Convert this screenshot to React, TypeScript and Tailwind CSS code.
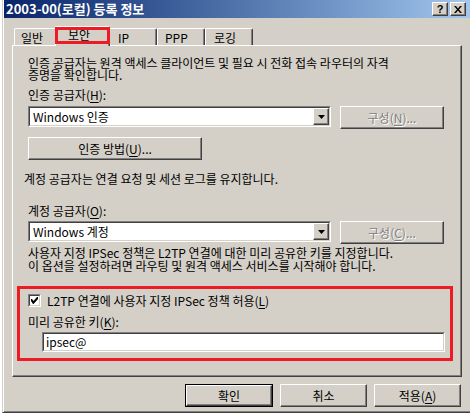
import React from 'react';

const raised =
  'border border-t-white border-l-white border-r-[#404040] border-b-[#404040] shadow-[inset_-1px_-1px_0_#808080]';
const sunken = 'border border-t-[#808080] border-l-[#808080] border-r-white border-b-white';
const sunkenInner = 'border border-t-[#404040] border-l-[#404040] border-r-[#d4d0c8] border-b-[#d4d0c8]';

function Combo({ value }: { value: string }) {
  return (
    <div className={`w-[303px] h-[21px] ${sunken}`}>
      <div className={`h-full flex items-center bg-white ${sunkenInner}`}>
        <span className="flex-1 pl-[3px] leading-[12px]">{value}</span>
        <div className={`w-[16px] h-[17px] bg-[#d4d0c8] flex items-center justify-center ${raised}`}>
          <svg width="7" height="4" viewBox="0 0 7 4">
            <path d="M0 0h7L3.5 4z" fill="#000" />
          </svg>
        </div>
      </div>
    </div>
  );
}

function Button({
  children,
  className = '',
  disabled = false,
}: {
  children: React.ReactNode;
  className?: string;
  disabled?: boolean;
}) {
  return (
    <div
      className={`h-[23px] bg-[#d4d0c8] flex items-center justify-center leading-[12px] ${raised} ${className} ${
        disabled ? 'text-[#808080] [text-shadow:1px_1px_0_#fff]' : ''
      }`}
    >
      {children}
    </div>
  );
}

function Key({ k }: { k: string }) {
  return <u className="underline-offset-[2px]">{k}</u>;
}

const tabs = [
  { label: '일반', w: 'w-[43px]', pl: 'pl-[6px]' },
  { label: '보안', w: 'w-[51px]', pl: 'pl-[10px]', active: true },
  { label: 'IP', w: 'w-[49px]', pl: 'pl-[9px]' },
  { label: 'PPP', w: 'w-[48px]', pl: 'pl-[7px]' },
  { label: '로깅', w: 'w-[48px]', pl: 'pl-[8px]' },
];

export default function App() {
  return (
    <div className="w-[470px] h-[415px] bg-white overflow-hidden font-['Noto_Sans_CJK_KR',sans-serif] text-[12px] text-black">
      <div className="ml-[2px] w-[476px] h-[413px] border-l border-l-[#d4d0c8] border-b border-b-[#404040]">
        <div className="h-full border-l border-l-white bg-[#d4d0c8] shadow-[inset_0_-1px_0_#808080] flex flex-col">
          {/* Title bar */}
          <div className="h-[18px] flex items-center justify-between pr-[12px] bg-gradient-to-r from-[#0a246a] to-[#a6caf0]">
            <span className="pl-[2px] text-white font-bold text-[13px] leading-[14px]">2003-00(로컬) 등록 정보</span>
            <div className="flex gap-[2px]">
              <div className={`w-[16px] h-[14px] bg-[#d4d0c8] flex items-center justify-center ${raised}`}>
                <span className="font-['Liberation_Sans',sans-serif] font-bold text-[11px] leading-[11px]">?</span>
              </div>
              <div className={`w-[16px] h-[14px] bg-[#d4d0c8] flex items-center justify-center ${raised}`}>
                <svg width="8" height="7" viewBox="0 0 8 7">
                  <path d="M0 0h2l2 2.5L6 0h2L5 3.5 8 7H6L4 4.5 2 7H0l3-3.5z" fill="#000" />
                </svg>
              </div>
            </div>
          </div>

          {/* Tabs */}
          <div className="mt-[8px] h-[19px] pl-[10px] flex items-end">
            {tabs.map((t) =>
              t.active ? (
                <div
                  key={t.label}
                  className={`relative z-10 -mx-[2px] -mb-[1px] h-[20px] w-[55px] bg-[#d4d0c8] border-t border-l border-r border-t-white border-l-white border-r-[#404040] rounded-t-[2px] shadow-[inset_-1px_0_0_#808080] pl-[12px] pt-[2px] leading-[12px]`}
                >
                  {t.label}
                  <div className="absolute left-[-1px] right-[-1px] top-[0px] bottom-[2px] border-[3px] border-[#ed1c24]" />
                </div>
              ) : (
                <div
                  key={t.label}
                  className={`${t.w} ${t.pl} h-[17px] border-t border-l border-r border-t-white border-l-white border-r-[#404040] rounded-t-[2px] shadow-[inset_-1px_0_0_#808080] pt-[3px] leading-[12px]`}
                >
                  {t.label}
                </div>
              )
            )}
          </div>

          {/* Tab panel */}
          <div className={`ml-[8px] w-[450px] h-[332px] pl-[4px] pt-[11px] flex flex-col ${raised}`}>
            <p className="ml-[11px] leading-[12px]">
              인증 공급자는 원격 액세스 클라이언트 및 필요 시 전화 접속 라우터의 자격
              <br />
              증명을 확인합니다.
            </p>
            <p className="ml-[11px] mt-[8px] leading-[12px]">
              인증 공급자(<Key k="H" />):
            </p>
            <div className="ml-[11px] mt-[5px] flex items-start gap-[9px]">
              <Combo value="Windows 인증" />
              <Button className="w-[104px]" disabled>
                구성(<Key k="N" />)...
              </Button>
            </div>
            <Button className="ml-[11px] mt-[8px] w-[174px]">
              인증 방법(<Key k="U" />)...
            </Button>
            <p className="ml-[7px] mt-[13px] leading-[12px]">계정 공급자는 연결 요청 및 세션 로그를 유지합니다.</p>
            <p className="ml-[11px] mt-[20px] leading-[12px]">
              계정 공급자(<Key k="O" />):
            </p>
            <div className="ml-[11px] mt-[4px] flex items-start gap-[9px]">
              <Combo value="Windows 계정" />
              <Button className="w-[104px]" disabled>
                구성(<Key k="C" />)...
              </Button>
            </div>
            <p className="ml-[11px] mt-[2px] leading-[13px]">
              사용자 지정 IPSec 정책은 L2TP 연결에 대한 미리 공유한 키를 지정합니다.
              <br />
              이 옵션을 설정하려면 라우팅 및 원격 액세스 서비스를 시작해야 합니다.
            </p>

            {/* Highlighted IPSec group */}
            <div className="mt-[14px] w-[436px] border-[3px] border-[#ed1c24] pt-[5px] pl-[8px] pb-[6px] flex flex-col">
              <div className="flex items-center">
                <div className={`w-[13px] h-[13px] ${sunken}`}>
                  <div className={`w-full h-full bg-white flex items-center justify-center ${sunkenInner}`}>
                    <svg width="7" height="7" viewBox="0 0 7 7">
                      <path d="M0 2h1l1.5 2L6 0h1v2L2.5 7H2L0 4z" fill="#000" />
                    </svg>
                  </div>
                </div>
                <span className="ml-[6px] leading-[12px]">
                  L2TP 연결에 사용자 지정 IPSec 정책 허용(<Key k="L" />)
                </span>
              </div>
              <p className="mt-[9px] leading-[12px]">
                미리 공유한 키(<Key k="K" />):
              </p>
              <div className={`mt-[4px] ml-[14px] w-[403px] h-[20px] ${sunken}`}>
                <div className={`h-full bg-white flex items-center pl-[2px] leading-[12px] ${sunkenInner}`}>ipsec@</div>
              </div>
            </div>
          </div>

          {/* Dialog buttons */}
          <div className="ml-[8px] w-[449px] mt-[7px] flex justify-end gap-[7px]">
            <div className="w-[88px] h-[23px] border border-black">
              <div className={`h-full bg-[#d4d0c8] flex items-center justify-center leading-[12px] ${raised}`}>확인</div>
            </div>
            <Button className="w-[87px]">취소</Button>
            <Button className="w-[87px]">
              적용(<Key k="A" />)
            </Button>
          </div>
        </div>
      </div>
    </div>
  );
}
